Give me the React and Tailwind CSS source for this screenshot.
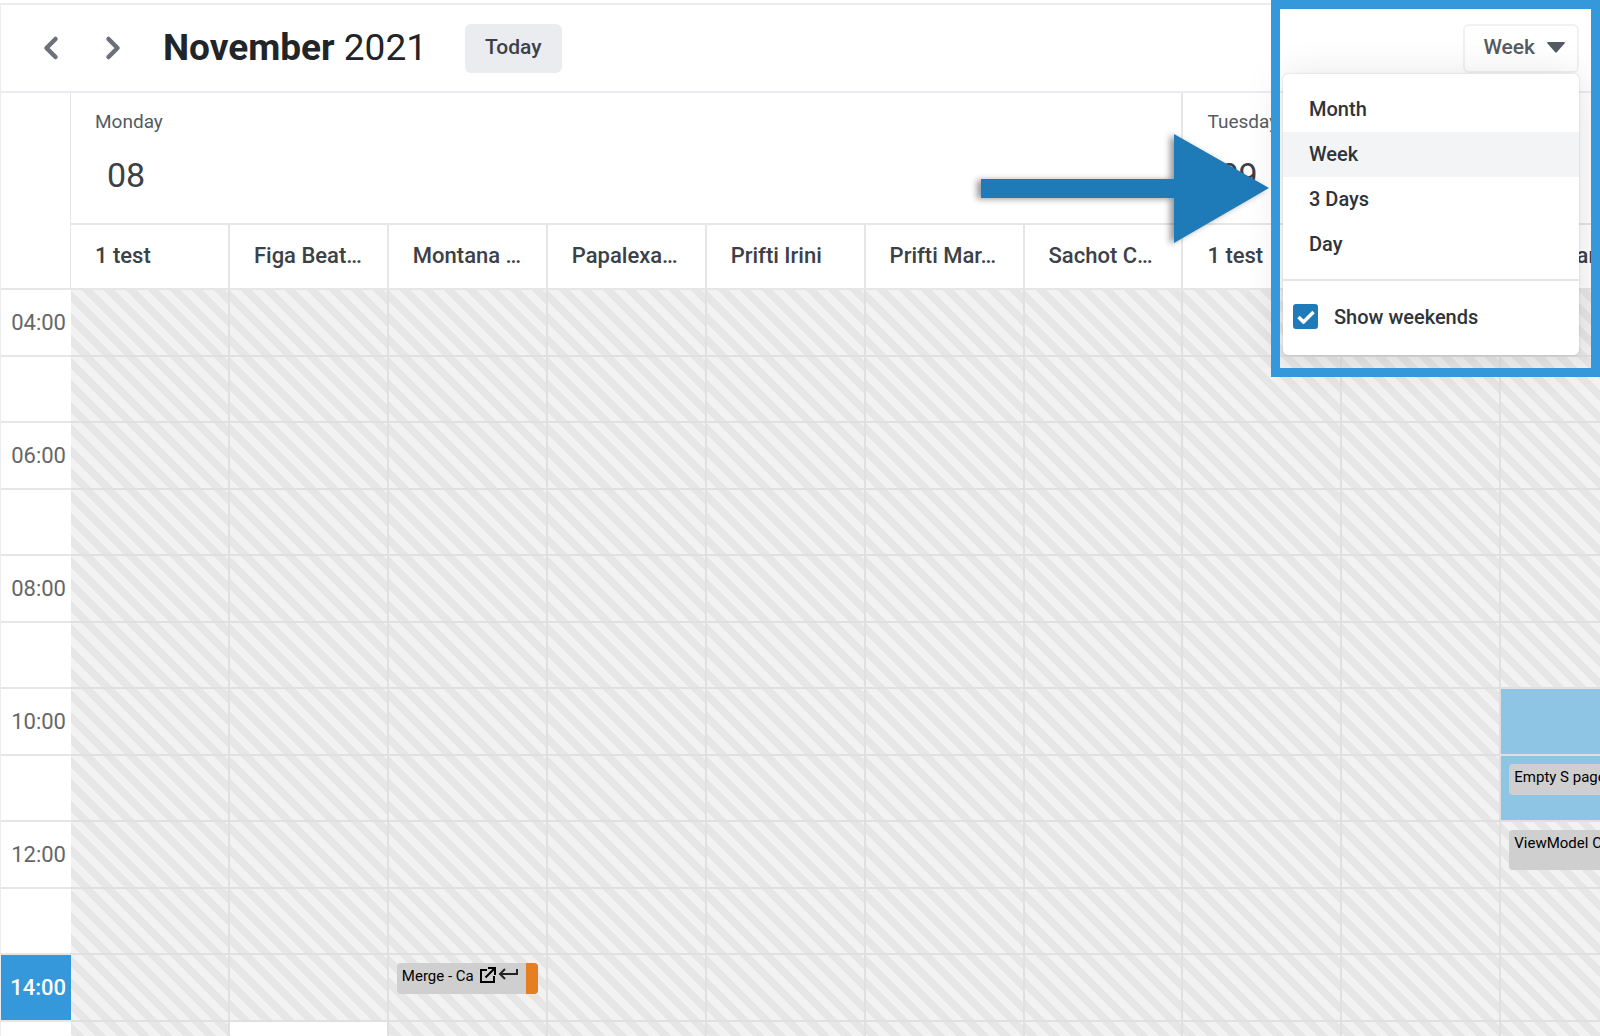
import { useState } from "react";
import { ChevronLeft, ChevronRight } from "lucide-react";

const people = [
  "1 test",
  "Figa Beat…",
  "Montana …",
  "Papalexa…",
  "Prifti Irini",
  "Prifti Mar…",
  "Sachot C…",
];

const days = [
  { name: "Monday", number: "08" },
  { name: "Tuesday", number: "09" },
];

const rows = [
  "04:00",
  "",
  "06:00",
  "",
  "08:00",
  "",
  "10:00",
  "",
  "12:00",
  "",
  "14:00",
  "",
];

const currentRow = 10;

const views = ["Month", "Week", "3 Days", "Day"];

const columns = days.flatMap((day) =>
  people.map((person) => ({ id: `${day.name}-${person}`, person }))
);

// keyed by "row-column"
const events = {
  "7-9": { title: "Empty S page", height: "h-[31px]" },
  "8-9": { title: "ViewModel C", height: "h-[40px]" },
  "10-2": { title: "Merge - Ca", height: "h-[31px]", tagged: true },
};

const cellColors = {
  "6-9": "bg-[#8ec5e5]",
  "7-9": "bg-[#8ec5e5]",
  "11-1": "bg-white",
};

const stripes =
  "bg-[linear-gradient(45deg,#f2f2f2_25%,#e6e6e6_25%,#e6e6e6_50%,#f2f2f2_50%,#f2f2f2_75%,#e6e6e6_75%)] bg-[length:22px_22px]";

function ExternalIcon() {
  return (
    <svg viewBox="0 0 18 18" className="h-[18px] w-[18px]" fill="none" stroke="black" strokeWidth="2">
      <path d="M1 4H8M2 3V16H15V10" />
      <path d="M6.500 11.500 15 3M9 2H16V9" />
    </svg>
  );
}

function ReturnIcon() {
  return (
    <svg viewBox="0 0 20 18" className="h-[18px] w-[20px]" fill="none" stroke="#222" strokeWidth="2">
      <path d="M7 3 2 8 7 13M2 8H19V3" />
    </svg>
  );
}

function EventCard({ event }) {
  return (
    <div
      className={`mx-2 mt-2 flex overflow-hidden rounded-[4px] bg-[#cfcfcf] text-[15px] leading-[27px] text-black ${event.height}`}
    >
      <span className="min-w-0 flex-1 overflow-hidden whitespace-nowrap pl-[5px]">
        {event.title}
      </span>
      {event.tagged && (
        <>
          <span className="flex gap-px pl-1 pr-2 pt-[3px]">
            <ExternalIcon />
            <ReturnIcon />
          </span>
          <span className="w-3 bg-[#e67e22]" />
        </>
      )}
    </div>
  );
}

function ViewMenu({ view, setView, weekends, setWeekends }) {
  return (
    <div className="absolute right-0 top-full z-10 mt-px w-[296px] rounded-[5px] bg-white pb-[2px] pt-[13px] text-[20px] font-medium text-[#2f343a] shadow-[0_0_2px_rgba(0,0,0,0.2),0_4px_40px_rgba(0,0,0,0.12)]">
      {views.map((item) => (
        <button
          key={item}
          onClick={() => setView(item)}
          className={`block h-[45px] w-full px-[26px] text-left ${
            view === item ? "bg-[#f3f4f6]" : ""
          }`}
        >
          {item}
        </button>
      ))}
      <label className="mt-3 flex h-[74px] items-center gap-4 border-t-2 border-[#e4e4e6] px-[10px]">
        <span className="grid place-items-center">
          <input
            type="checkbox"
            checked={weekends}
            onChange={(e) => setWeekends(e.target.checked)}
            className="col-start-1 row-start-1 h-[25px] w-[25px] appearance-none rounded-[3px] border-2 border-[#1f7ab8] checked:bg-[#1f7ab8]"
          />
          {weekends && (
            <svg
              viewBox="0 0 18 14"
              className="pointer-events-none col-start-1 row-start-1 h-[14px] w-[18px]"
              fill="none"
              stroke="white"
              strokeWidth="3.500"
            >
              <path d="M1.500 7 6.500 12 16.500 2" />
            </svg>
          )}
        </span>
        Show weekends
      </label>
    </div>
  );
}

export default function App() {
  const [view, setView] = useState("Week");
  const [weekends, setWeekends] = useState(true);
  const [open, setOpen] = useState(true);

  return (
    <div className="relative h-screen overflow-hidden bg-white pt-[3px] font-['Roboto','Liberation_Sans',sans-serif] text-[#212529]">
      <div className="border-l border-t-2 border-[#ebecef]">
        <header className="flex h-[88px] items-center border-b-2 border-[#ebecef] pr-[21px]">
          <button aria-label="Previous week" className="ml-8 text-[#6b7178]">
            <ChevronLeft className="h-9 w-9" strokeWidth={3} />
          </button>
          <button aria-label="Next week" className="ml-[26px] text-[#6b7178]">
            <ChevronRight className="h-9 w-9" strokeWidth={3} />
          </button>
          <h1 className="ml-8 pb-[2px] text-[37px] leading-none">
            <strong className="font-bold">November</strong> 2021
          </h1>
          <button className="ml-[38px] h-[49px] rounded-[6px] bg-[#ebecf0] px-5 pb-px text-[21px] font-medium text-[#3c4147]">
            Today
          </button>
          <div className="relative ml-auto">
            <button
              aria-haspopup="menu"
              aria-expanded={open}
              onClick={() => setOpen(!open)}
              className="flex h-[49px] items-center gap-3 rounded-[6px] border-2 border-[#f1f1f3] pb-px pl-[18px] pr-3 text-[21px] font-medium text-[#555b62]"
            >
              {view}
              <svg viewBox="0 0 18 11" className="h-[11px] w-[18px]" fill="currentColor">
                <path d="M1 0H17Q18.500 0 17.500 1.500L10 10Q9 11 8 10L.5 1.500Q-.5 0 1 0Z" />
              </svg>
            </button>
            {open && (
              <ViewMenu
                view={view}
                setView={setView}
                weekends={weekends}
                setWeekends={setWeekends}
              />
            )}
          </div>
        </header>

        <table className="w-[2295px] table-fixed border-separate border-spacing-0">
          <colgroup>
            <col className="w-[70px]" />
            {columns.map((column) => (
              <col key={column.id} />
            ))}
          </colgroup>
          <thead>
            <tr className="h-[132px]">
              <td rowSpan={2} className="border-b-2 border-r border-[#e6e6e6]" />
              {days.map((day) => (
                <th
                  key={day.name}
                  colSpan={people.length}
                  scope="colgroup"
                  className="border-b-2 border-r-2 border-[#e6e6e6] px-6 text-left align-top font-normal"
                >
                  <div className="mt-4 text-[19px] leading-[26px] text-[#555b62]">{day.name}</div>
                  <div className="mt-5 px-3 text-[34px] leading-[40px] text-[#3c4147]">
                    {day.number}
                  </div>
                </th>
              ))}
            </tr>
            <tr className="h-[65px]">
              {columns.map((column) => (
                <th
                  key={column.id}
                  scope="col"
                  className="whitespace-nowrap border-b-2 border-r-2 border-[#e6e6e6] px-6 pb-[2px] text-left text-[22px] font-medium text-[#3c4147]"
                >
                  {column.person}
                </th>
              ))}
            </tr>
          </thead>
          <tbody>
            {rows.map((time, row) => (
              <tr key={row} className="h-[66px] odd:h-[67px]">
                <th
                  scope="row"
                  className={`border-b-2 border-[#e6e6e6] pr-[5px] text-right text-[22px] ${
                    row === currentRow
                      ? "bg-[#3498db] font-medium text-white"
                      : "font-normal text-[#666]"
                  }`}
                >
                  {time}
                </th>
                {columns.map((column, col) => {
                  const key = `${row}-${col}`;
                  return (
                    <td
                      key={column.id}
                      className={`border-b-2 border-r-2 border-[#e0e0e0] p-0 align-top ${
                        cellColors[key] || stripes
                      }`}
                    >
                      {events[key] && <EventCard event={events[key]} />}
                    </td>
                  );
                })}
              </tr>
            ))}
          </tbody>
        </table>
      </div>

      <div className="pointer-events-none absolute right-0 top-0 z-20 h-[377px] w-[329px] border-[9px] border-[#3498db]" />
      <svg
        viewBox="0 0 300 120"
        className="pointer-events-none absolute right-[325px] top-[128px] h-[120px] w-[300px] drop-shadow-[-4px_1px_3px_rgba(0,0,0,0.4)]"
        fill="#1f7ab8"
      >
        <path d="M6 51H199V6L294 60 199 115V70H6Z" />
      </svg>
    </div>
  );
}
